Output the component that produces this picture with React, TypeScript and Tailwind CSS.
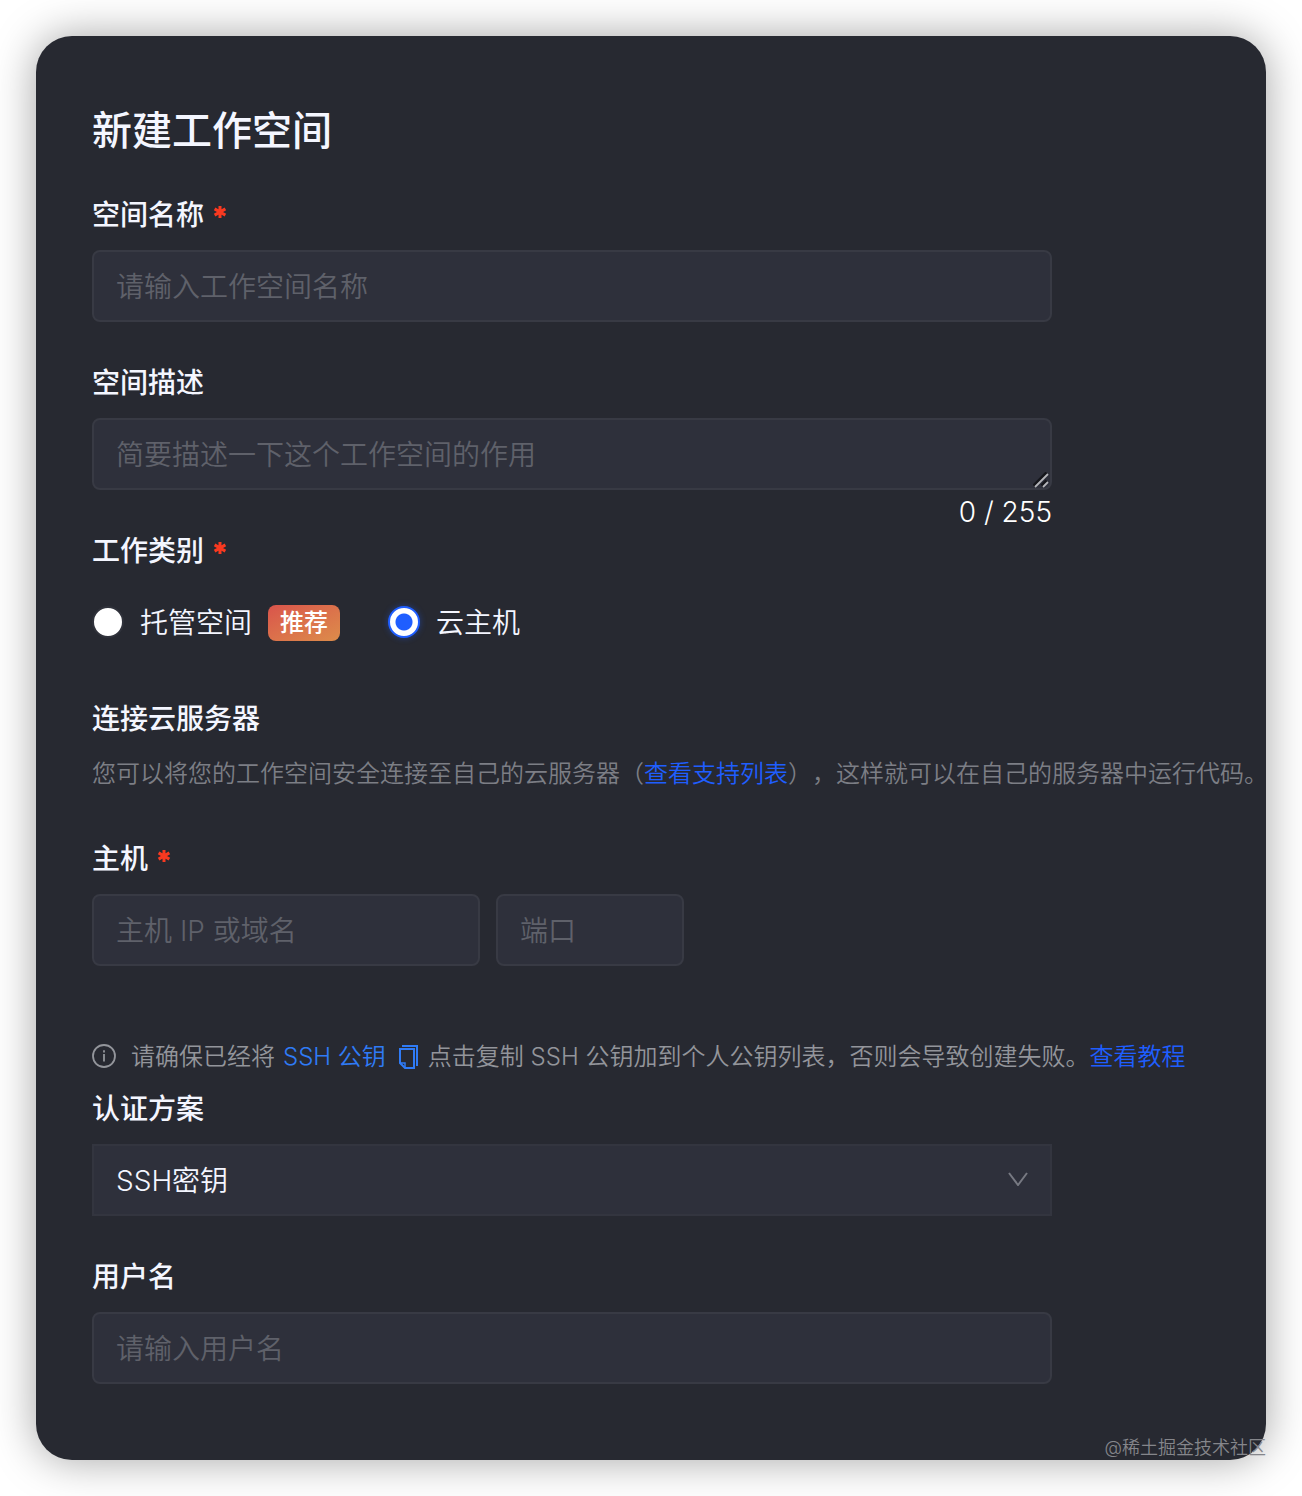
import { useState } from 'react';
import type { ReactNode } from 'react';

const fieldClass =
  'block h-[72px] w-full rounded-lg border-2 border-[#383a44] bg-[#2e303b] px-[22px] pt-[2px] text-[28px] font-[350] text-[#f4f6ff] placeholder:text-[#5f616a] placeholder:opacity-100 focus:border-[#2468f2] focus:outline-none';

interface FieldLabelProps {
  htmlFor?: string;
  required?: boolean;
  children: ReactNode;
}

const FieldLabel = ({ htmlFor, required, children }: FieldLabelProps) => (
  <label htmlFor={htmlFor} className="mb-[14px] flex items-center gap-2 text-[28px] leading-[42px] font-medium text-[#f4f6ff]">
    {children}
    {required && <RequiredMark />}
  </label>
);

const RequiredMark = () => (
  <svg viewBox="0 0 16 16" className="mb-[6px] h-4 w-4" fill="none" stroke="#f93920" strokeWidth="3" aria-hidden="true">
    <path d="M8 2v12M2.6 4.9l10.8 6.2M2.6 11.1l10.8-6.2" />
  </svg>
);

const InfoIcon = () => (
  <svg viewBox="0 0 24 24" className="h-6 w-6 shrink-0" fill="none" stroke="currentColor" strokeWidth="1.8" aria-hidden="true">
    <circle cx="12" cy="12" r="11" />
    <path d="M12 10v7.5M12 6.2v2.2" />
  </svg>
);

const CopyIcon = () => (
  <svg viewBox="0 0 22 26" className="h-[26px] w-[22px]" fill="none" stroke="currentColor" strokeWidth="2" aria-hidden="true">
    <path d="M2 5h14v19H7l-5-5z" />
    <path d="M2 19h5v5" strokeWidth="1.5" />
    <path d="M4 2h15v20" />
  </svg>
);

interface RadioProps {
  value: string;
  current: string;
  onSelect: (value: string) => void;
  children: ReactNode;
}

const Radio = ({ value, current, onSelect, children }: RadioProps) => (
  <label className="flex cursor-pointer items-center gap-4 text-[28px] font-[350] text-[#f4f6ff]">
    <input
      type="radio"
      name="kind"
      value={value}
      checked={current === value}
      onChange={() => onSelect(value)}
      className="h-8 w-8 appearance-none rounded-full border-2 border-[#30323b] bg-white checked:border-[#1f5eff] checked:bg-[radial-gradient(circle,#1f5eff_8px,white_9px)] checked:shadow-[0_0_6px_rgba(31,94,255,0.4)]"
    />
    <span className="flex items-center gap-4 pt-[2px]">{children}</span>
  </label>
);

export default function App() {
  const [name, setName] = useState('');
  const [description, setDescription] = useState('');
  const [kind, setKind] = useState('cloud');

  return (
    <div className="overflow-hidden bg-white p-9 font-[Inter,'Noto_Sans_CJK_SC',sans-serif] [text-spacing-trim:space-all]">
      <main className="relative rounded-[36px] bg-[#272931] pt-[68px] pr-1 pb-[76px] pl-14 shadow-[0_0_44px_rgba(0,0,0,0.36)]">
        <form onSubmit={(e) => e.preventDefault()}>
          <h1 className="mb-9 text-[40px] leading-[54px] font-medium text-[#f4f6ff]">新建工作空间</h1>

          <div className="mb-10 max-w-[960px]">
            <FieldLabel htmlFor="name" required>空间名称</FieldLabel>
            <input
              id="name"
              value={name}
              onChange={(e) => setName(e.target.value)}
              placeholder="请输入工作空间名称"
              className={fieldClass}
            />
          </div>

          <div className="max-w-[960px]">
            <FieldLabel htmlFor="description">空间描述</FieldLabel>
            <div className="relative">
              <textarea
                id="description"
                rows={1}
                maxLength={255}
                value={description}
                onChange={(e) => setDescription(e.target.value)}
                placeholder="简要描述一下这个工作空间的作用"
                className={`${fieldClass} resize-none overflow-hidden leading-[66px]`}
              />
              <svg viewBox="0 0 16 16" className="pointer-events-none absolute right-[3px] bottom-[2px] h-4 w-4" fill="none" aria-hidden="true">
                <path d="M1 14L14 1M9 14l5-5" stroke="#15161b" strokeWidth="4" />
                <path d="M2 15L15 2M10 15l5-5" stroke="#b4b5ba" strokeWidth="1.8" />
              </svg>
            </div>
            <p className="pt-1 text-right text-[28px] leading-9 font-[350] text-white">{description.length} / 255</p>
          </div>

          <fieldset className="mb-10">
            <legend className="mb-[14px] flex items-center gap-2 text-[28px] leading-[42px] font-medium text-[#f4f6ff]">
              工作类别
              <RequiredMark />
            </legend>
            <div className="flex h-[72px] items-center gap-12">
              <Radio value="hosted" current={kind} onSelect={setKind}>
                托管空间
                <span className="rounded-lg bg-linear-to-br from-[#d9534b] to-[#dc8c4a] px-3 text-2xl leading-9 font-medium text-white">推荐</span>
              </Radio>
              <Radio value="cloud" current={kind} onSelect={setKind}>云主机</Radio>
            </div>
          </fieldset>

          <section className="mb-[46px]">
            <h2 className="mb-4 text-[28px] leading-[42px] font-medium text-[#f4f6ff]">连接云服务器</h2>
            <p className="text-2xl leading-9 font-[350] whitespace-nowrap text-[#7c7e85]">
              您可以将您的工作空间安全连接至自己的云服务器（<a href="#support" className="text-[#1f5eff]">查看支持列表</a>），这样就可以在自己的服务器中运行代码。
            </p>
          </section>

          <div className="mb-[72px] max-w-[592px]">
            <FieldLabel htmlFor="host" required>主机</FieldLabel>
            <div className="flex gap-4">
              <input id="host" placeholder="主机 IP 或域名" className={fieldClass} />
              <div className="w-[188px] shrink-0">
                <input aria-label="端口" placeholder="端口" className={fieldClass} />
              </div>
            </div>
          </div>

          <div className="mb-[14px] flex items-center text-2xl leading-9 font-[350] whitespace-nowrap text-[#93959b]">
            <InfoIcon />
            <div className="ml-[15px] flex h-9 items-center pt-[2px]">
              <span>请确保已经将</span>
              <button type="button" className="mx-2 flex cursor-pointer items-center gap-3 text-[#2f7bf6]">
                SSH 公钥
                <CopyIcon />
              </button>
              <span>点击复制 SSH 公钥加到个人公钥列表，否则会导致创建失败。</span>
              <a href="#guide" className="text-[#1f5eff]">查看教程</a>
            </div>
          </div>

          <div className="mb-10 max-w-[960px]">
            <FieldLabel htmlFor="auth">认证方案</FieldLabel>
            <div className="relative">
              <select
                id="auth"
                className="block h-[72px] w-full appearance-none border-2 border-[#33353f] bg-[#2e303b] px-[22px] pt-[2px] text-[28px] font-[350] text-[#f4f6ff] focus:outline-none"
              >
                <option>SSH密钥</option>
                <option>密码</option>
              </select>
              <svg viewBox="0 0 20 14" className="pointer-events-none absolute top-7 right-6 h-[14px] w-5" fill="none" stroke="#777982" strokeWidth="2" aria-hidden="true">
                <path d="M1 1l9 12 9-12" />
              </svg>
            </div>
          </div>

          <div className="max-w-[960px]">
            <FieldLabel htmlFor="user">用户名</FieldLabel>
            <input id="user" placeholder="请输入用户名" className={fieldClass} />
          </div>
        </form>
        <span className="absolute right-0 bottom-0 text-lg leading-6 font-[350] text-[#85868b]">@稀土掘金技术社区</span>
      </main>
    </div>
  );
}
